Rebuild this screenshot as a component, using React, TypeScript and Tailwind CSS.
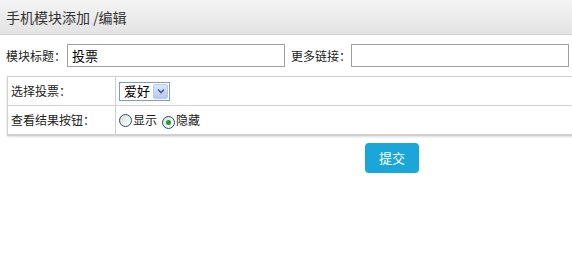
import React from "react";

const font = { fontFamily: '"Noto Sans CJK SC", "Liberation Sans", sans-serif' };

function Radio({ checked }: { checked?: boolean }) {
  return (
    <span className="inline-flex h-[13px] w-[13px] items-center justify-center rounded-full border border-[#1c5180] bg-gradient-to-br from-[#dcdcd7] to-[#ffffff]">
      {checked && <span className="h-[5px] w-[5px] rounded-full bg-[#21a121]" />}
    </span>
  );
}

export default function App() {
  return (
    <div className="h-[264px] w-[572px] overflow-hidden bg-white text-[12px] text-[#222]" style={font}>
      <div className="flex h-[35px] items-center border-b border-[#d2d2d2] bg-gradient-to-b from-[#f4f4f4] to-[#e3e3e3] pl-[6px] text-[14px] text-[#333]">
        手机模块添加 /编辑
      </div>
      <div className="mt-[9px] flex items-center pl-[6px]">
        <span className="w-[61px]">模块标题：</span>
        <div className="flex h-[23px] w-[218px] items-center border border-[#a0a0a0] pl-[4px] text-[13px] text-black">投票</div>
        <span className="ml-[6px] w-[60px]">更多链接：</span>
        <div className="h-[23px] w-[218px] border border-[#a0a0a0]" />
      </div>
      <div className="ml-[7px] mt-[9px] w-[570px] border-b-2 border-l border-t border-[#d0d0d0] shadow-[0_1px_2px_rgba(0,0,0,0.15)]">
        <div className="flex h-[29px] border-b border-[#d0d0d0]">
          <div className="flex w-[108px] items-center border-r border-[#d0d0d0] pl-[3px]">选择投票：</div>
          <div className="flex items-center pl-[3px]">
            <div className="flex h-[19px] w-[51px] items-center justify-between border border-[#7f9db9] bg-white pl-[4px] pr-[1px] text-[13px] text-black">
              <span>爱好</span>
              <span className="flex h-[15px] w-[15px] items-center justify-center rounded-[2px] border border-[#b8c8f0] bg-gradient-to-b from-[#dce6fc] to-[#b4c8f6]">
                <svg width="8" height="6" viewBox="0 0 8 6">
                  <path d="M1 1.5 L4 4.5 L7 1.5" stroke="#4d6185" strokeWidth="1.6" fill="none" />
                </svg>
              </span>
            </div>
          </div>
        </div>
        <div className="flex h-[28px]">
          <div className="flex w-[108px] items-center border-r border-[#d0d0d0] pl-[3px]">查看结果按钮：</div>
          <div className="flex items-center pl-[3px]">
            <Radio />
            <span className="ml-[1px]">显示</span>
            <span className="ml-[5px]"><Radio checked /></span>
            <span className="ml-[1px]">隐藏</span>
          </div>
        </div>
      </div>
      <div className="mt-[7px] pl-[365px]">
        <div className="flex h-[30px] w-[54px] items-center justify-center rounded-[4px] bg-[#1ba6da] text-[13px] text-white">提交</div>
      </div>
    </div>
  );
}
